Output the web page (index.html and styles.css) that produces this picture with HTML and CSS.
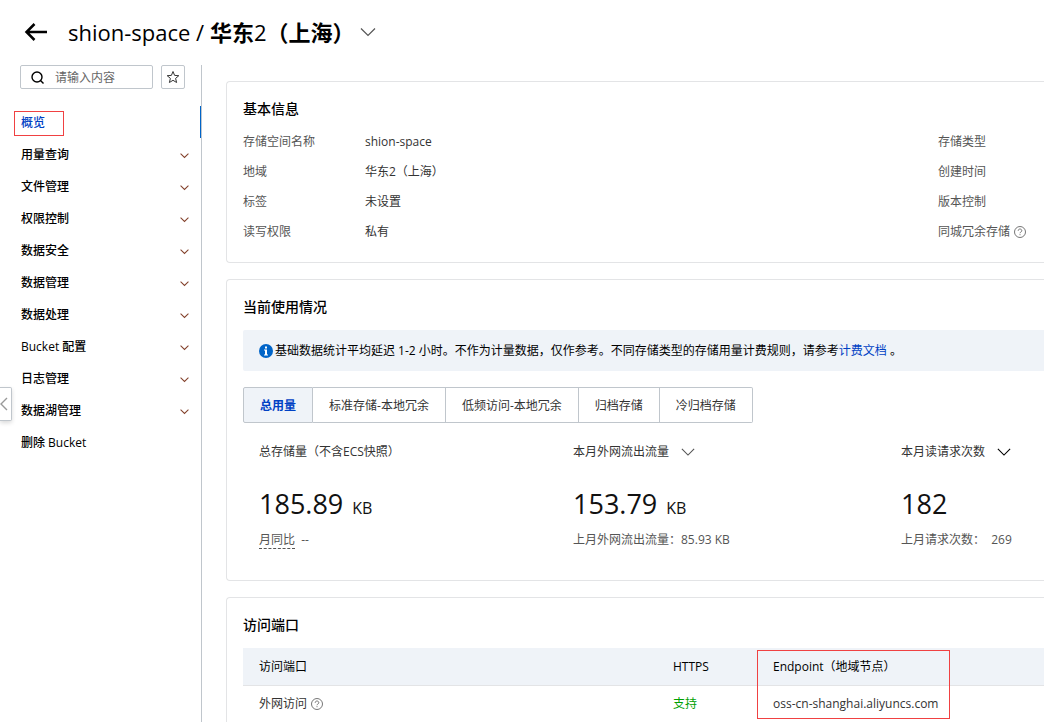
FILE: index.html
```html
<!DOCTYPE html>
<html lang="zh-CN">
<head>
  <meta charset="UTF-8" />
  <meta name="viewport" content="width=device-width, initial-scale=1.0"/>
  <title>shion-space - 概览</title>
  <link rel="stylesheet" href="styles.css">
</head>
<body>
  <svg class="sprite" aria-hidden="true">
    <symbol id="chevron" viewBox="0 0 16 16">
      <path d="M1 4.5l7 7 7-7" />
    </symbol>
    <symbol id="help" viewBox="0 0 14 14">
      <circle cx="7" cy="7" r="5.5" />
      <path d="M5.2 5.8c0-2.4 3.6-2.4 3.6 0 0 1.2-1.8 1.2-1.8 2.4M7 9.2v1" />
    </symbol>
  </svg>

  <header class="header">
    <a class="back" href="#" aria-label="返回">
      <svg viewBox="0 0 24 20"><path d="M10.5 2l-8 8 8 8M2.5 10H23" /></svg>
    </a>
    <h1>shion-space / <b>华东</b>2<b>（上海）</b></h1>
    <button class="icon-btn" aria-label="切换 Bucket"><svg class="chevron-lg"><use href="#chevron" /></svg></button>
  </header>

  <div class="layout">
    <aside class="sidebar">
      <div class="search-row">
        <label class="search">
          <svg viewBox="0 0 14 14"><circle cx="6" cy="7" r="5" /><path d="M9.5 10.5l3 3" /></svg>
          <input type="text" placeholder="请输入内容" aria-label="搜索">
        </label>
        <button class="star" aria-label="收藏">
          <svg viewBox="0 0 14 14"><path d="M7 1.5l1.6 3.9 4.2.3-3.2 2.7 1 4.1L7 10.3l-3.600 2.200 1-4.100-3.200-2.700 4.200-.3z" /></svg>
        </button>
      </div>
      <nav class="menu">
        <a class="active" href="#"><span>概览</span></a>
        <a href="#">用量查询<svg><use href="#chevron" /></svg></a>
        <a href="#">文件管理<svg><use href="#chevron" /></svg></a>
        <a href="#">权限控制<svg><use href="#chevron" /></svg></a>
        <a href="#">数据安全<svg><use href="#chevron" /></svg></a>
        <a href="#">数据管理<svg><use href="#chevron" /></svg></a>
        <a href="#">数据处理<svg><use href="#chevron" /></svg></a>
        <a href="#">Bucket 配置<svg><use href="#chevron" /></svg></a>
        <a href="#">日志管理<svg><use href="#chevron" /></svg></a>
        <a href="#">数据湖管理<svg><use href="#chevron" /></svg></a>
        <a href="#">删除 Bucket</a>
      </nav>
    </aside>

    <main class="main">
      <section class="card">
        <h2>基本信息</h2>
        <dl class="info">
          <dt>存储空间名称</dt><dd>shion-space</dd><dt>存储类型</dt>
          <dt>地域</dt><dd>华东2（上海）</dd><dt>创建时间</dt>
          <dt>标签</dt><dd>未设置</dd><dt>版本控制</dt>
          <dt>读写权限</dt><dd>私有</dd><dt>同城冗余存储<svg class="help"><use href="#help" /></svg></dt>
        </dl>
      </section>

      <section class="card">
        <h2>当前使用情况</h2>
        <div class="notice">
          <svg viewBox="0 0 14 14"><circle cx="7" cy="7" r="7" /><path d="M6 2.5h2v2H6zM5 5.5h3v5h1v1H5v-1h1v-4H5z" /></svg>
          <p>基础数据统计平均延迟 1-2 小时。不作为计量数据，仅作参考。不同存储类型的存储用量计费规则，请参考<a href="#">计费文档</a> 。</p>
        </div>
        <div class="tabs">
          <button class="active">总用量</button>
          <button>标准存储-本地冗余</button>
          <button>低频访问-本地冗余</button>
          <button>归档存储</button>
          <button>冷归档存储</button>
        </div>
        <div class="metrics">
          <div class="metric">
            <h3>总存储量（不含ECS快照）</h3>
            <p class="value">185.89 <small>KB</small></p>
            <p class="compare"><span class="tip">月同比</span>&nbsp; --</p>
          </div>
          <div class="metric">
            <h3>本月外网流出流量 <button class="icon-btn" aria-label="切换流量指标"><svg><use href="#chevron" /></svg></button></h3>
            <p class="value">153.79 <small>KB</small></p>
            <p class="compare">上月外网流出流量：85.93 KB</p>
          </div>
          <div class="metric">
            <h3>本月读请求次数 <button class="icon-btn dark" aria-label="切换请求指标"><svg><use href="#chevron" /></svg></button></h3>
            <p class="value">182</p>
            <p class="compare">上月请求次数：&nbsp; 269</p>
          </div>
        </div>
      </section>

      <section class="card">
        <h2>访问端口</h2>
        <table class="endpoints">
          <colgroup><col><col class="col-https"><col class="col-endpoint"></colgroup>
          <thead>
            <tr><th>访问端口</th><th>HTTPS</th><th class="marked">Endpoint（地域节点）</th></tr>
          </thead>
          <tbody>
            <tr><td>外网访问<svg class="help"><use href="#help" /></svg></td><td class="ok">支持</td><td>oss-cn-shanghai.aliyuncs.com</td></tr>
          </tbody>
        </table>
      </section>
    </main>
  </div>

  <button class="collapse" aria-label="收起菜单">
    <svg viewBox="0 0 8 14"><path d="M7 1L1 7l6 6" /></svg>
  </button>
</body>
</html>
```

FILE: styles.css
```css
:root {
  --text: #333;
  --blue: #0064c8;
  --link: #0041c4;
  --line: #e3e4e6;
  --control: #c0c6cc;
  --fill: #eff3f8;
  --mark: #f04142;
}

*,
*::after {
  margin: 0;
  padding: 0;
  box-sizing: border-box;
}

body {
  font-family: "Open Sans", "Noto Sans CJK SC", sans-serif;
  font-size: 12px;
  line-height: 20px;
  color: var(--text);
  background: #fff;
  height: 100vh;
  overflow: hidden;
  display: flex;
  flex-direction: column;
}

a {
  color: var(--link);
  text-decoration: none;
}

button,
input {
  font: inherit;
  color: inherit;
}

button {
  background: none;
  border: none;
  cursor: pointer;
}

svg {
  fill: none;
  stroke: currentColor;
  flex-shrink: 0;
}

.sprite {
  display: none;
}

.header {
  height: 65px;
  padding: 0 0 2px 24px;
  display: flex;
  align-items: center;
  flex-shrink: 0;
  color: #000;
}

.back {
  color: #000;
  display: flex;
}

.back svg {
  width: 24px;
  height: 20px;
  stroke-width: 2.5;
}

.header h1 {
  font-size: 22px;
  line-height: 32px;
  font-weight: 500;
  margin: 0 5px 0 20px;
}

.icon-btn {
  display: flex;
  color: #555;
}

.icon-btn svg {
  width: 14px;
  height: 14px;
  stroke-width: 1.3;
}

.icon-btn .chevron-lg {
  width: 16px;
  height: 16px;
  stroke-width: 1.2;
}

.icon-btn.dark {
  color: #000;
}

.layout {
  flex: 1;
  min-height: 0;
  display: flex;
}

.sidebar {
  width: 202px;
  flex-shrink: 0;
  border-right: 1px solid var(--control);
}

.search-row {
  display: flex;
  gap: 8px;
  padding: 0 16px 0 20px;
  margin-bottom: 17px;
}

.search,
.star {
  height: 24px;
  border: 1px solid var(--control);
  border-radius: 2px;
  display: flex;
  align-items: center;
}

.search {
  flex: 1;
  min-width: 0;
  gap: 10px;
  padding-left: 10px;
}

.search svg {
  width: 14px;
  height: 14px;
  stroke: #000;
  stroke-width: 1.4;
}

.search input {
  width: 100%;
  min-width: 0;
  padding-top: 2px;
  border: none;
  outline: none;
  background: none;
}

.search input::placeholder {
  color: #666;
}

.star {
  width: 24px;
  justify-content: center;
}

.star svg {
  width: 14px;
  height: 14px;
}

.menu a {
  height: 32px;
  padding: 2px 12px 0 21px;
  display: flex;
  align-items: center;
  justify-content: space-between;
  color: #000;
  font-weight: 500;
}

.menu svg {
  width: 9px;
  height: 9px;
  stroke: #84422c;
  stroke-width: 1.8;
}

.menu .active {
  color: var(--link);
  border-right: 1px solid var(--blue);
}

.menu .active span {
  position: relative;
}

.menu .active span::after {
  content: "";
  position: absolute;
  top: -2px;
  left: -7px;
  width: 50px;
  height: 25px;
  border: 1px solid var(--mark);
}

.main {
  flex: 1;
  min-width: 0;
  padding: 16px 0 0 24px;
  display: flex;
  flex-direction: column;
  gap: 16px;
}

/* cards run on past the right edge of the window */
.card {
  flex-shrink: 0;
  padding: 16px 0 20px 16px;
  border: 1px solid var(--line);
  border-right: none;
  border-radius: 4px 0 0 4px;
}

.card h2 {
  font-size: 14px;
  line-height: 22px;
  font-weight: 500;
  color: #000;
  margin-bottom: 12px;
}

.info {
  display: grid;
  grid-template-columns: 122px minmax(0, 1fr) 106px;
  row-gap: 10px;
}

.info dt {
  color: #555;
}

.help {
  width: 14px;
  height: 14px;
  margin-left: 3px;
  vertical-align: -3px;
  color: #777;
}

.notice {
  background: var(--fill);
  color: #000;
  padding: 11px 16px 10px;
  display: flex;
  align-items: center;
  gap: 2px;
  border-radius: 2px 0 0 2px;
}

.notice p {
  white-space: nowrap;
}

.notice svg {
  width: 14px;
  height: 14px;
  stroke: none;
  fill: var(--blue);
}

.notice path {
  fill: #fff;
}

.tabs {
  display: flex;
  margin: 16px 0 19px;
}

.tabs button {
  height: 36px;
  padding: 2px 16px 0;
  border: 1px solid var(--control);
  border-left-width: 0;
}

.tabs button:first-child {
  border-left-width: 1px;
  border-radius: 2px 0 0 2px;
}

.tabs button:last-child {
  border-radius: 0 2px 2px 0;
}

.tabs .active {
  background: var(--fill);
  color: var(--link);
  font-weight: 700;
}

.metrics {
  display: grid;
  grid-template-columns: 314fr 328fr 143fr;
  padding: 0 0 10px 16px;
}

.metric {
  min-width: 0;
  white-space: nowrap;
}

.metric h3 {
  font-size: 12px;
  font-weight: 400;
  display: flex;
  align-items: center;
  gap: 12px;
}

.value {
  font-size: 27px;
  line-height: 36px;
  color: #111;
  margin: 24px 0 8px;
}

.value small {
  font-size: 16px;
  line-height: 16px;
  margin-left: 2px;
}

.compare {
  color: #555;
}

.tip {
  border-bottom: 1px dashed #555;
}

.endpoints {
  width: 100%;
  table-layout: fixed;
  border-collapse: collapse;
}

.endpoints .col-https {
  width: 100px;
}

.endpoints .col-endpoint {
  width: 287px;
}

.endpoints th,
.endpoints td {
  height: 37px;
  padding: 1px 16px 0;
  text-align: left;
  font-weight: 400;
  border-bottom: 1px solid var(--line);
}

.endpoints th {
  background: var(--fill);
  color: #000;
}

.endpoints .ok {
  color: #00a000;
}

.endpoints .marked {
  position: relative;
}

.marked::after {
  content: "";
  position: absolute;
  top: 2px;
  left: 0;
  width: 193px;
  height: 69px;
  border: 1px solid var(--mark);
}

/* handle on the window edge */
.collapse {
  position: absolute;
  left: 0;
  top: 387px;
  width: 12px;
  height: 34px;
  border: 1px solid var(--control);
  border-left: none;
  border-radius: 0 2px 2px 0;
  background: #fff;
  color: #999;
  box-shadow: 0 2px 4px rgba(0, 0, 0, 0.15);
}

.collapse svg {
  display: block;
  width: 8px;
  height: 14px;
  stroke-width: 1.4;
}
```
